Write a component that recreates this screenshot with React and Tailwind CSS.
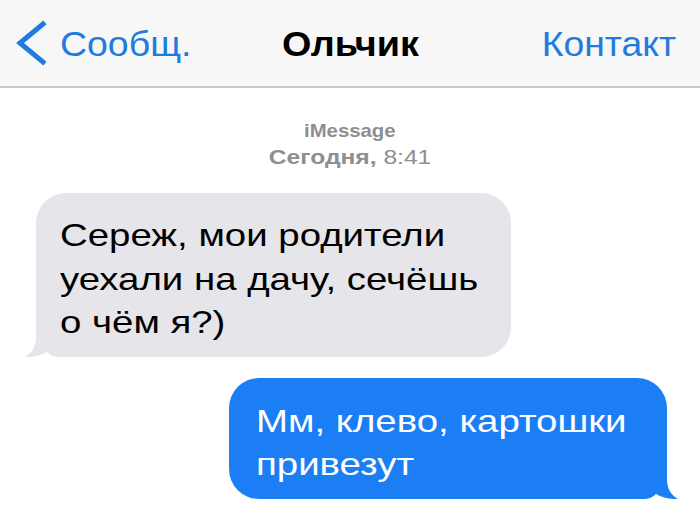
// bubble tail, drawn for the left side; flipped for outgoing messages
function Tail({ color, flip }) {
  return (
    <svg
      width="40"
      height="40"
      viewBox="0 0 40 40"
      className={
        flip
          ? "absolute right-[-12px] bottom-0 -scale-x-100"
          : "absolute left-[-12px] bottom-0"
      }
    >
      <path
        d="M12,0 L12,20 C12,30 8,36 1,40 C8,40.5 17,38.5 23,35 C26,38 30,40 36,40 L40,40 L40,0 Z"
        fill={color}
      />
    </svg>
  );
}

export default function App() {
  return (
    <div className="w-[700px] h-[508px] bg-white overflow-hidden font-['Liberation_Sans',Arial,sans-serif]">

      {/* Nav bar */}
      <div className="h-[88px] bg-[#f7f7f7] border-b-2 border-[#c9c9cc] grid grid-cols-[1fr_auto_1fr] items-center">

        <div className="flex items-center pl-[14px]">
          <svg width="34" height="48" viewBox="0 0 34 48" className="text-[#1f7be0]">
            <path
              d="M29,5 L6,24 L29,43"
              fill="none"
              stroke="currentColor"
              strokeWidth="5"
              strokeLinecap="square"
              strokeLinejoin="miter"
            />
          </svg>
          <span className="ml-[12px] inline-block origin-left scale-x-[1.07] text-[35px] text-[#1f7be0] leading-none">
            Сообщ.
          </span>
        </div>

        <div className="origin-center scale-x-[1.08] text-[35px] font-bold text-black leading-none">
          Ольчик
        </div>

        <div className="flex justify-end pr-[24px]">
          <span className="inline-block origin-right scale-x-[1.065] text-[35px] text-[#1f7be0] leading-none">
            Контакт
          </span>
        </div>

      </div>

      {/* Conversation */}
      <div className="pt-[30px]">

        <div className="flex flex-col items-center text-[#8e8e93] leading-[26px]">
          <div className="scale-x-[1.07] text-[19px] font-bold">iMessage</div>
          <div className="scale-x-[1.23] text-[20px]">
            <span className="font-bold">Сегодня,</span> 8:41
          </div>
        </div>

        <div className="mt-[23px] ml-[36px] w-[475px] relative">
          <Tail color="#e5e5ea" />
          <div className="relative bg-[#e5e5ea] rounded-[30px] pl-[24px] pt-[21px] pb-[12px] text-[32px] leading-[43.5px] text-black">
            <div className="origin-left scale-x-[1.2]">
              Сереж, мои родители
              <br />
              уехали на дачу, сечёшь
              <br />
              о чём я?)
            </div>
          </div>
        </div>

        <div className="mt-[21px] ml-[229px] w-[438px] relative">
          <Tail color="#1b7ef5" flip />
          <div className="relative bg-[#1b7ef5] rounded-[30px] pl-[27px] pt-[22px] pb-[12px] text-[32px] leading-[43.5px] text-white">
            <div className="origin-left scale-x-[1.2]">
              Мм, клево, картошки
              <br />
              привезут
            </div>
          </div>
        </div>

      </div>
    </div>
  );
}
